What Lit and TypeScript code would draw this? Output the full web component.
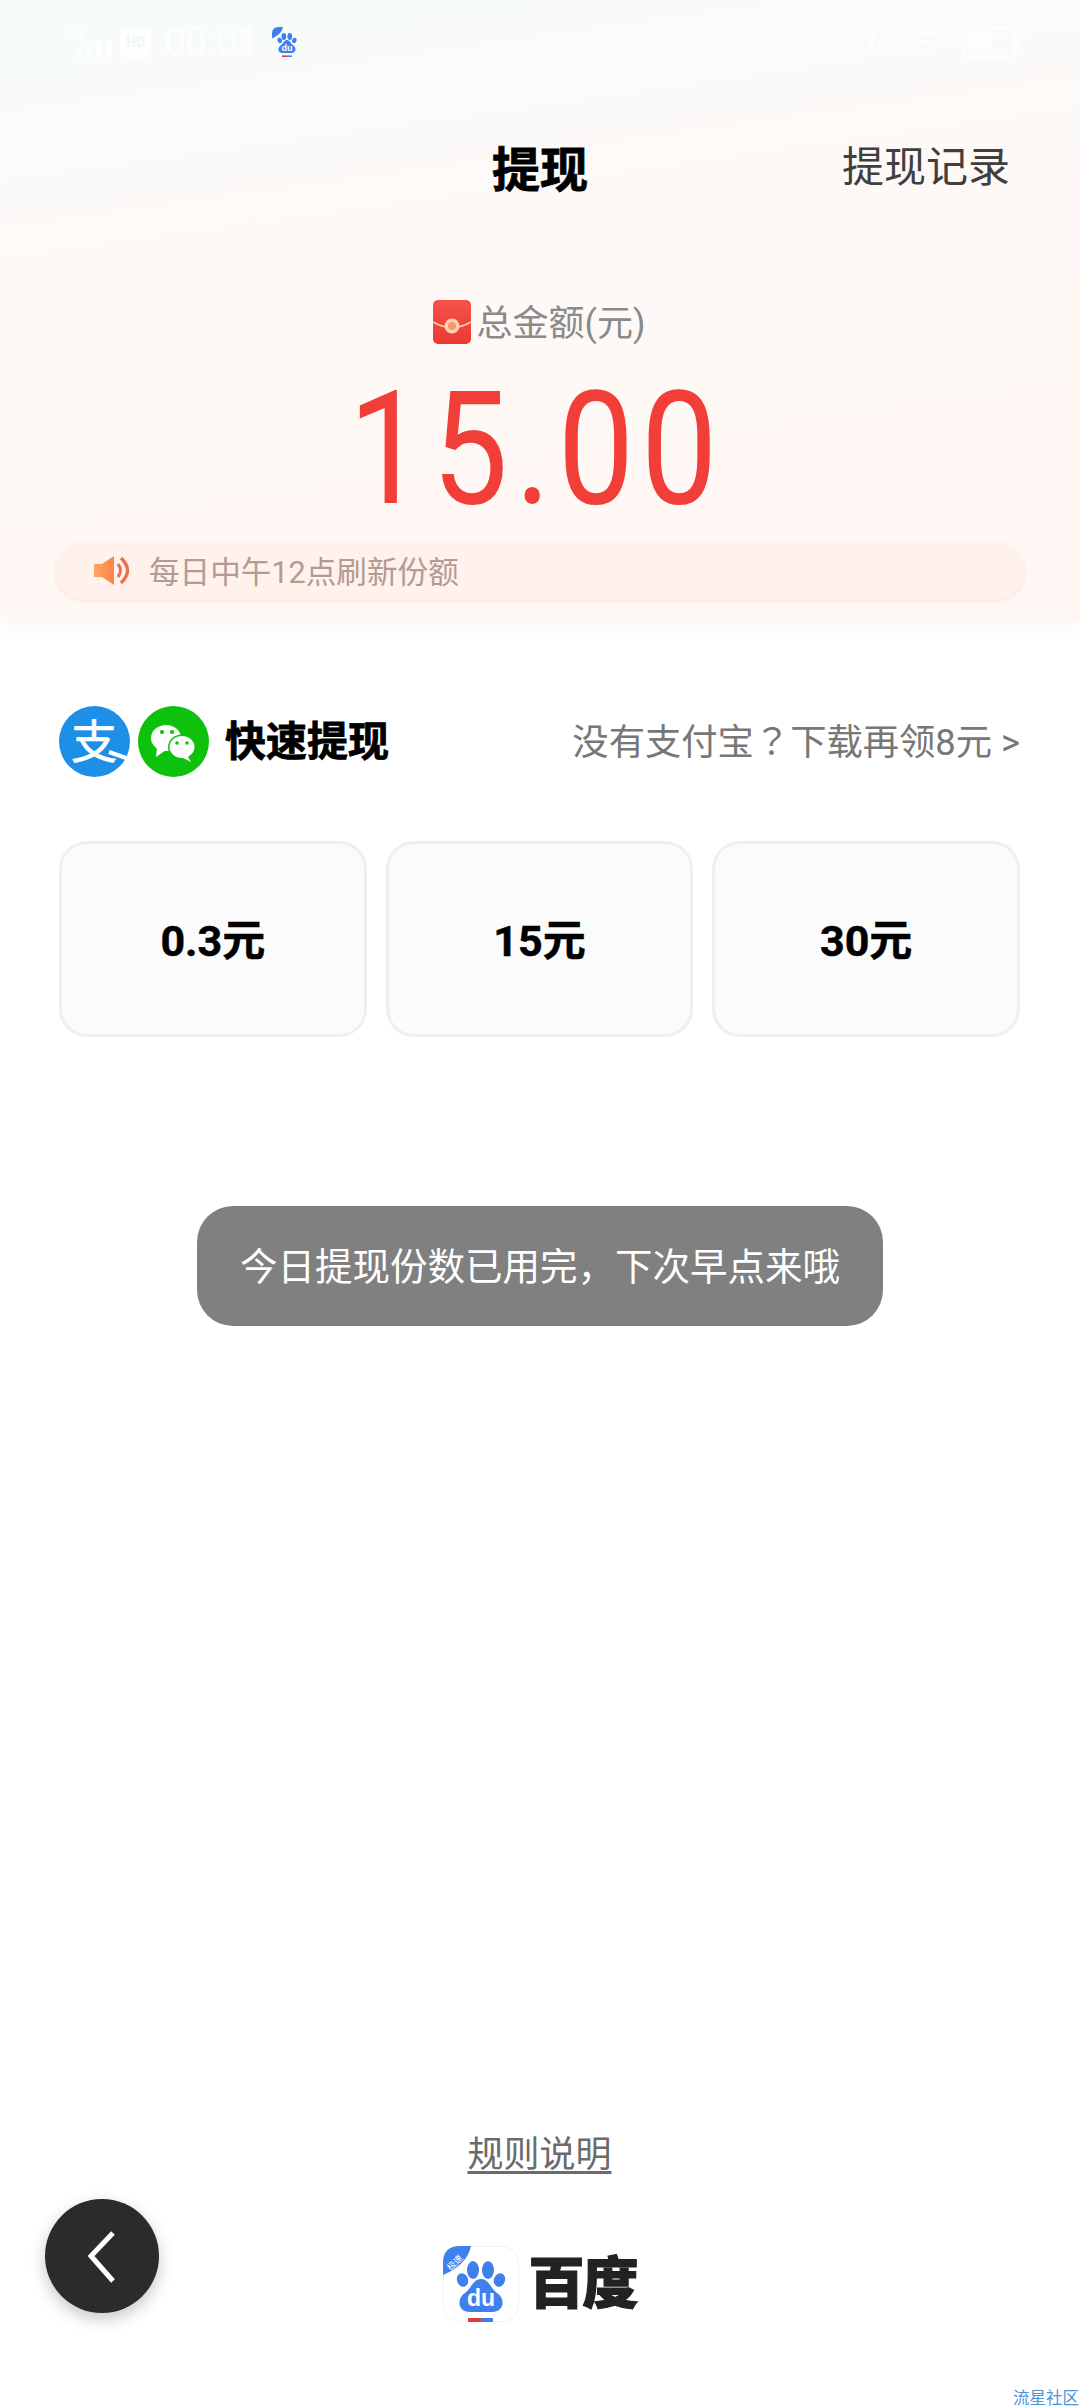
import { LitElement, html, css, svg } from "lit";
import { customElement, property } from "lit/decorators.js";

@customElement("baidu-mark")
class BaiduMark extends LitElement {
  static styles = css`
    :host {
      display: block;
      line-height: 0;
    }
    .du {
      font-family: "Liberation Sans", sans-serif;
      font-weight: 700;
      font-size: 23px;
      fill: #fff;
    }
    .badge {
      font-family: "Noto Sans CJK SC", sans-serif;
      font-size: 9px;
      fill: #fff;
    }
  `;

  @property({ type: Number }) size = 76;
  @property({ type: Boolean }) framed = false;

  render() {
    return html`
      <svg width=${this.size} height=${this.size} viewBox="0 0 76 76">
        ${this.framed
          ? svg`<rect x="0.5" y="0.5" width="75" height="75" rx="17" fill="#fff" stroke="#f2f2f2" />`
          : ""}
        <path d="M0 29 V17 Q0 0 17 0 H28 Q24 19 0 29Z" fill="#3f7fee" />
        ${this.framed
          ? svg`<text class="badge" transform="translate(14 19) rotate(-45)" text-anchor="middle">极速</text>`
          : ""}
        <ellipse cx="19.5" cy="34" rx="5.5" ry="7" transform="rotate(-20 19.5 34)" fill="#3f7fee" />
        <ellipse cx="30" cy="24" rx="6" ry="9" fill="#3f7fee" />
        <ellipse cx="45" cy="24" rx="6" ry="9" fill="#3f7fee" />
        <ellipse cx="56.5" cy="34" rx="5.5" ry="7" transform="rotate(20 56.5 34)" fill="#3f7fee" />
        <path
          d="M38 33 C30 33 28 43 22 47 C13 53 15 66 27 66 H49 C61 66 63 53 54 47 C48 43 46 33 38 33Z"
          fill="#3f7fee"
        />
        <text class="du" x="38" y="60" text-anchor="middle">du</text>
        <rect x="25" y="72" width="13" height="4" fill="#d9403b" />
        <rect x="38" y="72" width="12" height="4" fill="#3f7fee" />
      </svg>
    `;
  }
}

@customElement("app-root")
export class AppRoot extends LitElement {
  static styles = css`
    :host {
      display: block;
      position: relative;
      width: 1080px;
      height: 2408px;
      overflow: hidden;
      background: #fff;
      font-family: Roboto, "Noto Sans CJK SC", sans-serif;
      color: #000;
    }

    .page {
      display: flex;
      flex-direction: column;
      height: 100%;
    }

    .top {
      height: 622px;
      flex: none;
      box-sizing: border-box;
      background: linear-gradient(172deg, #f5fbfb 0%, #f9fbfa 14%, #fdf9f7 34%, #fff8f5 70%, #fff7f3 100%);
      box-shadow: 0 8px 14px rgba(0, 0, 0, 0.025);
    }

    .status {
      height: 84px;
      padding: 0 60px;
      display: flex;
      align-items: center;
      justify-content: space-between;
      color: #fff;
    }
    .status-left,
    .status-right {
      display: flex;
      align-items: center;
    }
    .faint {
      opacity: 0.75;
    }
    .hd {
      width: 31px;
      height: 31px;
      margin-left: 4px;
      border-radius: 6px;
      background: #fff;
      color: #eef6f5;
      font-size: 14px;
      font-weight: 700;
      display: flex;
      align-items: center;
      justify-content: center;
    }
    .time {
      margin-left: 13px;
      font-size: 38px;
      line-height: 42px;
    }
    .status-paw {
      margin-left: 13px;
    }
    .status-right {
      gap: 18px;
    }

    .nav {
      position: relative;
      height: 168px;
      display: flex;
      align-items: center;
      justify-content: center;
    }
    .nav h1 {
      margin: 6px 0 0;
      font-size: 48px;
      font-weight: 700;
      line-height: 60px;
      -webkit-text-stroke: 0.8px #000;
    }
    .records {
      position: absolute;
      right: 70px;
      top: 58px;
      font-size: 42px;
      line-height: 52px;
      color: #3f3f3f;
    }

    .label {
      margin-top: 47px;
      height: 46px;
      display: flex;
      align-items: center;
      justify-content: center;
      gap: 6px;
      font-size: 36px;
      color: #8a8a8a;
    }
    .label span {
      margin-bottom: 5px;
      margin-right: 2px;
    }

    .amount {
      margin-top: 34px;
      height: 140px;
      padding-right: 8px;
      display: flex;
      justify-content: center;
      color: #f23e39;
    }
    .amount span {
      display: block;
      font-size: 158px;
      line-height: 140px;
      font-weight: 400;
      letter-spacing: 8px;
      transform: scaleX(0.86);
    }

    .notice {
      margin: 23px 55px 0;
      height: 58px;
      padding-left: 39px;
      display: flex;
      align-items: center;
      gap: 17px;
      border-radius: 29px;
      background: #fff1ec;
      box-shadow: 0 1px 3px rgba(240, 190, 170, 0.35);
      color: #b39a93;
    }
    .notice span {
      margin-top: 3px;
      font-size: 30.6px;
      line-height: 46px;
    }

    .main {
      flex: 1;
      padding: 84px 60px 0 59px;
      display: flex;
      flex-direction: column;
    }
    .quick {
      height: 71px;
      display: flex;
      align-items: center;
    }
    .pay-icons {
      display: flex;
      gap: 8px;
    }
    .quick h2 {
      margin: 0 0 0 16px;
      font-size: 41px;
      font-weight: 700;
      line-height: 52px;
      -webkit-text-stroke: 0.8px #000;
    }
    .promo {
      margin-left: auto;
      padding-bottom: 2px;
      font-size: 36.3px;
      line-height: 48px;
      color: #777;
      white-space: nowrap;
    }
    .promo .q {
      font-family: "Noto Sans CJK TC", sans-serif;
    }
    .alipay-char {
      font-family: "Noto Sans CJK SC", sans-serif;
      font-size: 46px;
      fill: #fff;
      stroke: #fff;
      stroke-width: 0.7px;
    }

    .options {
      margin-top: 64px;
      display: grid;
      grid-template-columns: repeat(3, 1fr);
      gap: 19px;
    }
    .option {
      height: 196px;
      box-sizing: border-box;
      padding-bottom: 5px;
      border: 3px solid #efefef;
      border-radius: 28px;
      background: #fbfbfb;
      display: flex;
      align-items: center;
      justify-content: center;
      font-size: 43px;
      font-weight: 700;
      -webkit-text-stroke: 0.5px #000;
    }

    .footer {
      margin-top: auto;
      padding-bottom: 86px;
      display: flex;
      flex-direction: column;
      align-items: center;
      gap: 73px;
    }
    .rules {
      font-size: 36px;
      line-height: 36px;
      color: #6b6b6b;
      text-decoration: underline;
      text-underline-offset: 4px;
    }
    .brand {
      display: flex;
      align-items: center;
      gap: 10px;
    }
    .brand-name {
      font-size: 56px;
      line-height: 60px;
      font-weight: 900;
      color: #222;
      letter-spacing: -2px;
      -webkit-text-stroke: 1.2px #222;
    }

    .toast {
      position: absolute;
      left: 197px;
      top: 1206px;
      width: 686px;
      height: 120px;
      box-sizing: border-box;
      padding-bottom: 6px;
      border-radius: 36px;
      background: #808080;
      color: #fff;
      font-size: 37.5px;
      display: flex;
      align-items: center;
      justify-content: center;
      white-space: nowrap;
    }

    .back {
      position: absolute;
      left: 45px;
      top: 2199px;
      width: 114px;
      height: 114px;
      border-radius: 50%;
      background: #2b2b2b;
      box-shadow: 0 6px 16px rgba(0, 0, 0, 0.22);
      display: flex;
      align-items: center;
      justify-content: center;
    }

    .mark {
      position: absolute;
      left: 1013px;
      top: 2390px;
      font-size: 16.5px;
      line-height: 18px;
      color: #4a94dc;
      white-space: nowrap;
    }
  `;

  private options = ["0.3元", "15元", "30元"];

  private signalIcon() {
    return html`
      <svg class="faint" width="56" height="34" viewBox="0 0 56 34">
        <text x="3" y="15" font-size="17" font-weight="700" fill="#fff" font-family="Roboto">5G</text>
        <rect x="16" y="24" width="6" height="8" fill="#fff" />
        <rect x="26" y="20" width="6" height="12" fill="#fff" />
        <rect x="36" y="16" width="6" height="16" fill="#fff" />
        <rect x="46" y="16" width="6" height="16" fill="#fff" />
      </svg>
    `;
  }

  private muteIcon() {
    return html`
      <svg class="faint" width="26" height="32" viewBox="0 0 26 32" fill="none" stroke="#fff" stroke-width="3">
        <path d="M6 24 V14 Q6 5 13 5 Q20 5 20 14 V24 M3 24 H23 M10 28 H16 M3 3 L23 29" />
      </svg>
    `;
  }

  private wifiIcon() {
    return html`
      <svg class="faint" width="34" height="24" viewBox="0 0 34 24" fill="none" stroke="#fff" stroke-width="3">
        <path d="M2 9 Q17 -3 32 9 M8 15 Q17 8 26 15" />
        <circle cx="17" cy="20" r="2.5" fill="#fff" stroke="none" />
      </svg>
    `;
  }

  private batteryIcon() {
    return html`
      <svg class="faint" width="58" height="32" viewBox="0 0 58 32" fill="none">
        <rect x="1.5" y="1.5" width="52" height="29" rx="5" stroke="#fff" stroke-width="3" />
        <rect x="5" y="5" width="24" height="22" rx="2" fill="#fff" />
        <rect x="55" y="11" width="3" height="10" rx="1" fill="#fff" />
      </svg>
    `;
  }

  private redPacket() {
    return html`
      <svg width="38" height="44" viewBox="0 0 38 44">
        <defs>
          <linearGradient id="packet" x1="0" y1="0" x2="0" y2="1">
            <stop offset="0" stop-color="#f5524b" />
            <stop offset="1" stop-color="#ea3a32" />
          </linearGradient>
        </defs>
        <rect width="38" height="44" rx="5" fill="url(#packet)" />
        <path d="M0 22 Q19 33 38 22" fill="none" stroke="#fbd0b4" stroke-width="1.8" />
        <circle cx="19" cy="26" r="7.5" fill="#fbd0b4" />
        <circle cx="19" cy="26" r="4" fill="#f49a66" />
      </svg>
    `;
  }

  private speaker() {
    return html`
      <svg width="38" height="30" viewBox="0 0 38 30" fill="none">
        <defs>
          <linearGradient id="cone" x1="0" y1="0" x2="1" y2="0">
            <stop offset="0" stop-color="#ffa564" />
            <stop offset="1" stop-color="#ff8247" />
          </linearGradient>
        </defs>
        <path d="M0 8 H8 L20 0 V29 L8 21 H0Z" fill="url(#cone)" />
        <path d="M24 8 Q29 14.5 24 21" stroke="#ef6d50" stroke-width="3" />
        <path d="M27 2 Q40 14.5 27 27" stroke="#ef6d50" stroke-width="3.4" />
      </svg>
    `;
  }

  private alipay() {
    return html`
      <svg width="71" height="71" viewBox="0 0 71 71">
        <circle cx="35.5" cy="35.5" r="35.5" fill="#1e8fe6" />
        <text class="alipay-char" x="35" y="52" text-anchor="middle">支</text>
        <path d="M50 46 L70 53" stroke="#fff" stroke-width="4" fill="none" />
      </svg>
    `;
  }

  private wechat() {
    return html`
      <svg width="71" height="71" viewBox="0 0 71 71">
        <circle cx="35.5" cy="35.5" r="35.5" fill="#0dc10d" />
        <ellipse cx="28" cy="32" rx="15" ry="13" fill="#fff" />
        <path d="M19 41 L18 51 L28 44Z" fill="#fff" />
        <ellipse cx="44" cy="41" rx="14" ry="12.5" fill="#0dc10d" />
        <ellipse cx="44" cy="41" rx="12.5" ry="11" fill="#fff" />
        <path d="M49 49 L53 56 L43 51Z" fill="#fff" />
        <circle cx="24" cy="26" r="2.1" fill="#0dc10d" />
        <circle cx="34" cy="26" r="2.1" fill="#0dc10d" />
        <circle cx="39" cy="37" r="1.8" fill="#0dc10d" />
        <circle cx="49" cy="37" r="1.8" fill="#0dc10d" />
      </svg>
    `;
  }

  render() {
    return html`
      <div class="page">
        <section class="top">
          <div class="status">
            <div class="status-left">
              ${this.signalIcon()}
              <div class="hd faint">HD</div>
              <div class="time faint">00:01</div>
              <baidu-mark class="status-paw" size="30"></baidu-mark>
            </div>
            <div class="status-right">
              ${this.muteIcon()} ${this.wifiIcon()} ${this.batteryIcon()}
            </div>
          </div>
          <div class="nav">
            <h1>提现</h1>
            <div class="records">提现记录</div>
          </div>
          <div class="label">${this.redPacket()}<span>总金额(元)</span></div>
          <div class="amount"><span>15.00</span></div>
          <div class="notice">${this.speaker()}<span>每日中午12点刷新份额</span></div>
        </section>

        <section class="main">
          <div class="quick">
            <div class="pay-icons">${this.alipay()} ${this.wechat()}</div>
            <h2>快速提现</h2>
            <div class="promo">没有支付宝<span class="q">？</span>下载再领8元 &gt;</div>
          </div>
          <div class="options">
            ${this.options.map((o) => html`<div class="option">${o}</div>`)}
          </div>
          <div class="footer">
            <div class="rules">规则说明</div>
            <div class="brand">
              <baidu-mark framed size="76"></baidu-mark>
              <div class="brand-name">百度</div>
            </div>
          </div>
        </section>
      </div>

      <div class="toast">今日提现份数已用完，下次早点来哦</div>

      <div class="back">
        <svg width="36" height="56" viewBox="0 0 36 56" fill="none">
          <path d="M29 5 L7 28 L29 53" stroke="#fff" stroke-width="5" />
        </svg>
      </div>

      <div class="mark">流星社区</div>
    `;
  }
}
